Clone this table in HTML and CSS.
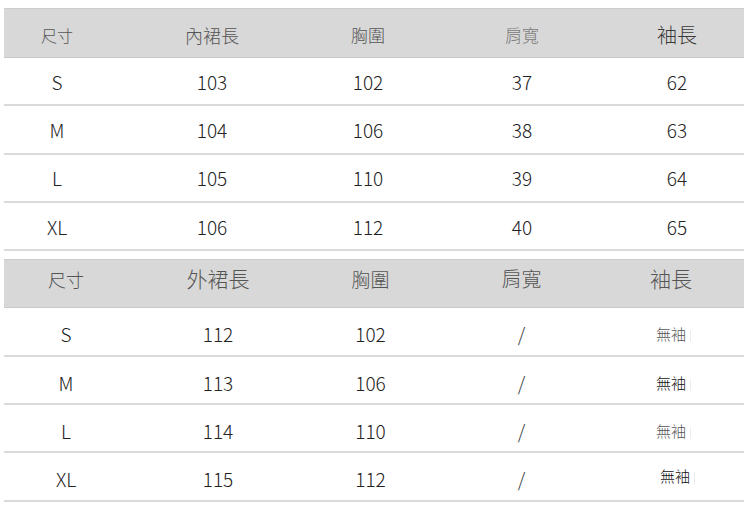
FILE: index.html
```html
<!DOCTYPE html>
<html lang="zh-Hant">
<head>
<meta charset="utf-8">
<title>尺寸表</title>
<link rel="stylesheet" href="styles.css">
</head>
<body>
<div class="page">
  <section class="table t1">
    <div class="row head">
      <span class="h1">尺寸</span>
      <span class="h2">內裙長</span>
      <span class="h3">胸圍</span>
      <span class="h4">肩寬</span>
      <span class="h5">袖長</span>
    </div>
    <div class="row"><span>S</span><span>103</span><span>102</span><span>37</span><span>62</span></div>
    <div class="row"><span>M</span><span>104</span><span>106</span><span>38</span><span>63</span></div>
    <div class="row"><span>L</span><span>105</span><span>110</span><span>39</span><span>64</span></div>
    <div class="row"><span>XL</span><span>106</span><span>112</span><span>40</span><span>65</span></div>
  </section>
  <section class="table t2">
    <div class="row head">
      <span class="h1">尺寸</span>
      <span class="h2">外裙長</span>
      <span class="h3">胸圍</span>
      <span class="h4">肩寬</span>
      <span class="h5">袖長</span>
    </div>
    <div class="row"><span>S</span><span>112</span><span>102</span><span class="slash">/</span><span class="ns light">無袖</span></div>
    <div class="row"><span>M</span><span>113</span><span>106</span><span class="slash">/</span><span class="ns dark">無袖</span></div>
    <div class="row"><span>L</span><span>114</span><span>110</span><span class="slash">/</span><span class="ns light">無袖</span></div>
    <div class="row"><span>XL</span><span>115</span><span>112</span><span class="slash">/</span><span class="ns dark shift">無袖</span></div>
  </section>
</div>
</body>
</html>
```

FILE: styles.css
```css
* { box-sizing: border-box; }

body {
  margin: 0;
  background: #ffffff;
  font-family: "Noto Sans CJK TC", "Noto Sans", sans-serif;
  font-weight: 300;
  color: #222222;
}

.page {
  width: 750px;
  padding: 8px 6px 0 4px;
}

.row {
  display: grid;
  align-items: center;
  justify-items: center;
  height: 48.33px;
  border-bottom: 2px solid #dadada;
  font-size: 19px;
  line-height: 1;
}

.t1 .row { grid-template-columns: 106px 204px 108px 200px 110px 12px; }
.t2 .row { grid-template-columns: 124px 180px 125px 177px 122px 12px; }

.row.head {
  background: #d8d8d8;
  border-top: 1px solid #cdcdcd;
  border-bottom: 1px solid #c9c9c9;
  color: #555555;
}

.t1 .head { height: 50px; padding-top: 3px; }
.t1 .head .h1 { font-size: 16px; }
.t1 .head .h2 { font-size: 18px; }
.t1 .head .h3 { font-size: 17px; }
.t1 .head .h4 { font-size: 17px; color: #7a7a7a; }
.t1 .head .h5 { font-size: 20px; color: #3a3a3a; }

.t2 { margin-top: 8px; }
.t2 .head { height: 49px; padding-bottom: 10px; }
.t2 .head .h1 { font-size: 18px; }
.t2 .head .h2 { font-size: 21px; }
.t2 .head .h3 { font-size: 19px; }
.t2 .head .h4 { font-size: 20px; }
.t2 .head .h5 { font-size: 21px; }

.t2 .row:not(.head) { padding-top: 5px; }

.slash {
  font-size: 19px;
  color: #333333;
}

.ns {
  font-size: 15px;
  position: relative;
}
.ns.light { color: #555555; }
.ns.dark { color: #111111; }
.ns.shift { margin-left: 8px; margin-top: -6px; }
.ns::after {
  content: "";
  position: absolute;
  right: -5px;
  top: 4px;
  width: 1px;
  height: 12px;
  background: #ececec;
}
```
